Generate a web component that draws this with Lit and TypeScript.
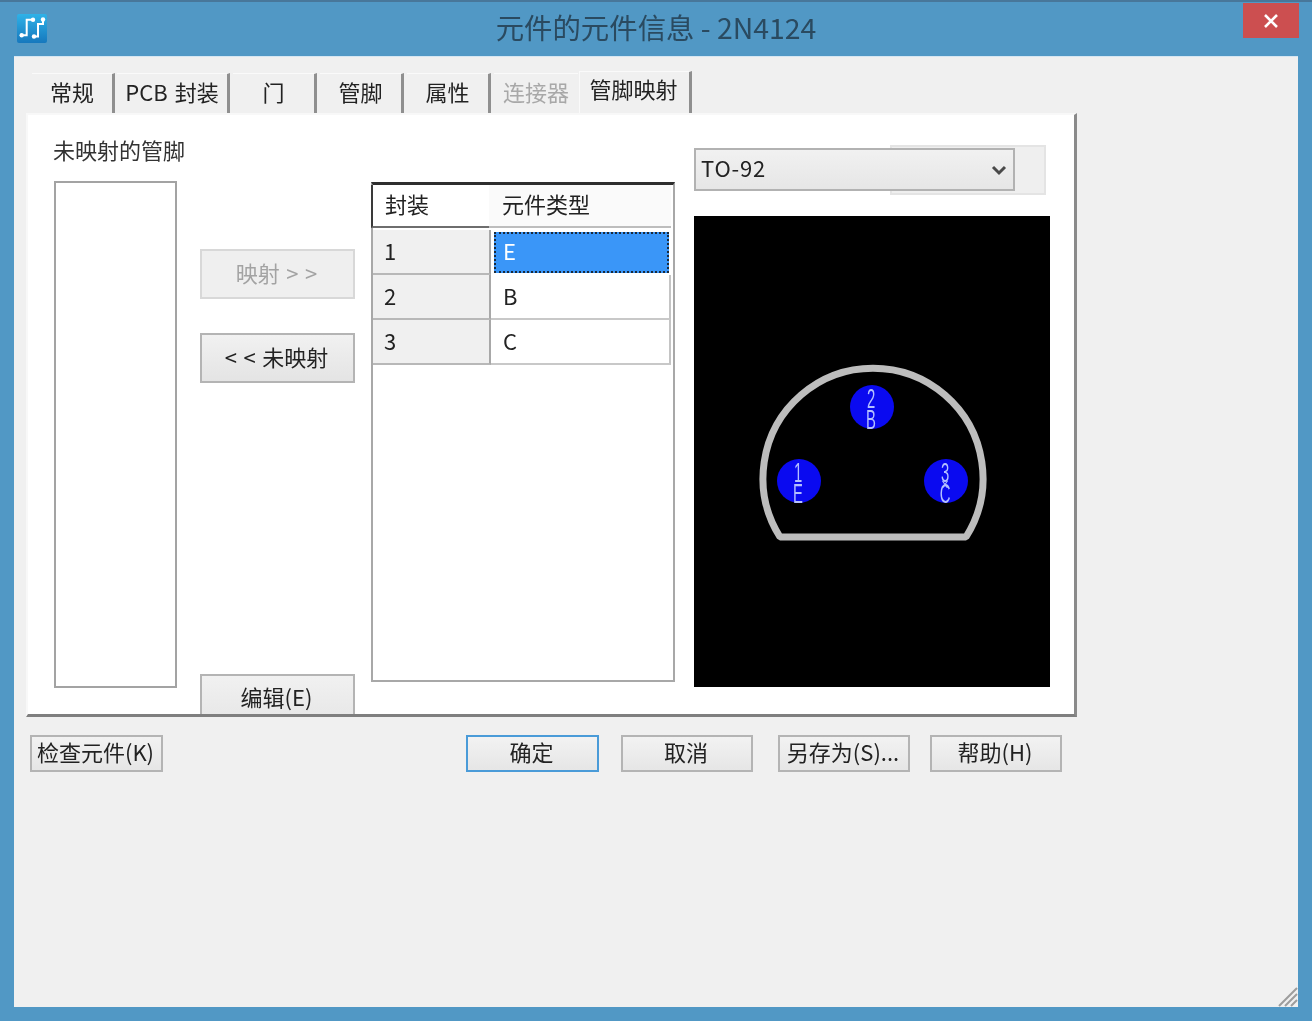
import { LitElement, html, css, svg } from "lit";
import { customElement } from "lit/decorators.js";

const tabs = [
  { t: "常规", w: 83, gap: 2 },
  { t: "PCB 封装", w: 113, gap: 3 },
  { t: "门", w: 84, gap: 3 },
  { t: "管脚", w: 84, gap: 3 },
  { t: "属性", w: 84, gap: 3 },
  { t: "连接器", w: 84, gap: 1, off: true },
  { t: "管脚映射", w: 113, gap: 0, on: true },
];
const rows = [["1", "E", true], ["2", "B", false], ["3", "C", false]] as const;
const pads = [
  { x: 872, y: 407, l: ["2", "B"] },
  { x: 799, y: 481, l: ["1", "E"] },
  { x: 946, y: 481, l: ["3", "C"] },
];

@customElement("app-root")
export class AppRoot extends LitElement {
  static styles = css`
    :host { display: block; width: 1312px; height: 1021px; overflow: hidden; font-family: "Noto Sans CJK SC", "Noto Sans", sans-serif; font-size: 22px; color: #222; }
    * { box-sizing: border-box; }
    .window { width: 1312px; height: 1021px; background: #5198c5; border-top: 2px solid #48779a; padding: 0 14px 14px; display: flex; flex-direction: column; position: relative; filter: blur(0.45px); }
    .title { height: 54px; flex: none; display: flex; align-items: center; justify-content: center; position: relative; font-size: 28.4px; color: #2a4a60; padding-bottom: 6px; }
    .appicon { position: absolute; left: 3px; top: 12px; width: 30px; height: 29px; }
    .close { position: absolute; right: -1px; top: 1px; width: 56px; height: 35px; background: #cc4f50; display: flex; align-items: center; justify-content: center; }
    .client { flex: 1; background: #f0f0f0; border-top: 1px solid #d5e6f2; padding: 14px 0 0 12px; position: relative; }
    .tabs { display: flex; align-items: flex-end; height: 42px; padding-left: 6px; position: relative; z-index: 1; }
    .tab { height: 40px; flex: none; border-right: 3px solid #8f8f8f; background: #f0f0f0; display: flex; align-items: center; justify-content: center; white-space: nowrap; line-height: 1; padding-bottom: 5px; border-top: 1px solid #fafafa; word-spacing: 2px; }
    .tab.off { color: #a8a8a8; border-right: none; }
    .tab.on { height: 42px; padding: 0 2px 9px 0; border-left: 1px solid #fafafa; }
    .panel { width: 1051px; height: 604px; background: #fff; border-top: 2px solid #f8f8f8; border-left: 2px solid #f8f8f8; border-right: 3px solid #8a8a8a; border-bottom: 3px solid #7f7f7f; overflow: hidden; display: grid; grid-template-columns: 123px 155px 304px 356px; column-gap: 0; padding-left: 26px; }
    .col1 { display: flex; flex-direction: column; }
    .label { height: 66px; padding-top: 19px; line-height: 30px; white-space: nowrap; margin-left: -1px; color: #333; }
    .list { width: 123px; height: 507px; border: 2px solid #a3a3a3; background: #fff; }
    .col2 { margin-left: 23px; width: 155px; display: flex; flex-direction: column; padding-top: 134px; }
    .btn { display: flex; align-items: center; justify-content: center; background: linear-gradient(#f1f1f1, #e4e4e4); border: 2px solid #b4b4b4; white-space: nowrap; line-height: 1; flex: none; padding-bottom: 5px; }
    .col2 .btn { width: 155px; height: 50px; word-spacing: 1.5px; padding-bottom: 4px; padding-right: 2px; }
    .col2 .b1 { color: #a3a3a3; background: #efefef; border-color: #d8d8d8; }
    .col2 .b2 { margin-top: 34px; }
    .col2 .b3 { margin-top: 291px; height: 60px; padding-bottom: 16px; }
    .col3 { margin-left: 39px; width: 304px; height: 500px; margin-top: 67px; border: 2px solid #a8a8a8; border-top: 3px solid #2e2e2e; background: #fff; position: relative; }
    .thead { display: grid; grid-template-columns: 118px 182px; height: 43px; margin-left: -2px; }
    .th { display: flex; align-items: center; line-height: 1; background: #fafafa; padding-bottom: 5px; }
    .th:first-child { border-left: 2px solid #3a3a3a; border-bottom: 2px solid #6e6e6e; background: #fff; border-right: 1px solid #e8e8e8; padding-left: 12px; width: 120px; }
    .th:last-child { border-bottom: 2px solid #bdbdbd; padding-left: 13px; }
    .tr { display: grid; grid-template-columns: 118px 182px; height: 45px; }
    .tr:nth-child(2) { margin-top: 2px; }
    .rh { background: #f0f0f0; border-right: 2px solid #a8a8a8; border-bottom: 2px solid #b8b8b8; display: flex; align-items: center; padding: 0 0 4px 11px; }
    .td { background: #fff; border-right: 2px solid #c4c4c4; border-bottom: 2px solid #c8c8c8; display: flex; align-items: center; padding: 0 0 4px 12px; margin-right: 2px; }
    .td.sel { background: #3a96f8; color: #fff; outline: 2px dotted #1a2a3c; outline-offset: -2px; margin: 2px 4px 2px 3px; border: none; padding: 0 0 6px 9px; }
    .col4 { margin-left: 58px; width: 356px; padding-top: 33px; display: flex; flex-direction: column; position: relative; }
    .selbox { width: 321px; height: 43px; border: 2px solid #b2b2b2; background: linear-gradient(#f1f1f1, #e6e6e6); display: flex; align-items: center; justify-content: space-between; padding: 0 6px 5px 5px; position: relative; z-index: 1; flex: none; letter-spacing: 0.8px; }
    .selbox svg { margin-top: 5px; }
    .selghost { position: absolute; left: 196px; top: 30px; width: 156px; height: 50px; background: #efefef; border: 2px solid #e4e4e4; }
    .canvas { display: block; width: 356px; height: 471px; margin-top: 25px; background: #000; flex: none; }
    .actions { display: flex; height: 37px; margin-top: 18px; margin-left: 4px; }
    .actions .btn { width: 132px; height: 37px; background: linear-gradient(#f2f2f2, #e6e6e6); padding-right: 2px; }
    .actions .k { width: 133px; margin-right: 303px; }
    .actions .ok { width: 133px; border-color: #4a9bd8; margin-right: 22px; }
    .actions .cancel { margin-right: 25px; }
    .actions .save { margin-right: 20px; }
    .grip { position: absolute; right: 0; bottom: 0; width: 22px; height: 22px; }
    .pad { fill: #0a0af0; }
    .outline { fill: none; stroke: #bdbdbd; stroke-width: 7; }
    .pl { fill: #b4c0ff; font-family: "Liberation Sans", sans-serif; font-size: 27px; font-weight: 400; text-anchor: middle; }
    .px { fill: #b4c0ff; font-family: "Liberation Sans", sans-serif; font-size: 13px; text-anchor: middle; }
  `;

  render() {
    return html`
      <div class="window">
        <div class="title">
          <svg class="appicon" viewBox="0 0 30 29">
            <defs><linearGradient id="ig" x1="0" y1="0" x2="0" y2="1"><stop offset="0" stop-color="#2fb2e8"/><stop offset="1" stop-color="#1678bd"/></linearGradient></defs>
            <rect width="30" height="29" rx="2" fill="url(#ig)"/>
            <path d="M4.7 21.3H9.7V5.7H16M17 22.5H21V10H26V5.5" fill="none" stroke="#fff" stroke-width="2"/>
            <circle cx="4.7" cy="21.3" r="2.2" fill="#fff"/><circle cx="16" cy="5.7" r="2.2" fill="#fff"/><circle cx="26" cy="5.5" r="2.2" fill="#fff"/><circle cx="17" cy="22.5" r="2.2" fill="#fff"/>
          </svg>
          元件的元件信息 - 2N4124
          <div class="close"><svg width="16" height="16" viewBox="0 0 16 16"><path d="M2 2l12 12M14 2L2 14" stroke="#fff" stroke-width="2.6"/></svg></div>
        </div>
        <div class="client">
          <div class="tabs">
            ${tabs.map((t) => html`<div class="tab ${t.off ? "off" : ""} ${t.on ? "on" : ""}" style="width:${t.w}px;margin-right:${t.gap}px">${t.t}</div>`)}
          </div>
          <div class="panel">
            <div class="col1">
              <div class="label">未映射的管脚</div>
              <div class="list"></div>
            </div>
            <div class="col2">
              <div class="btn b1">映射 &gt; &gt;</div>
              <div class="btn b2">&lt; &lt; 未映射</div>
              <div class="btn b3">编辑(E)</div>
            </div>
            <div class="col3">
              <div class="thead"><div class="th">封装</div><div class="th">元件类型</div></div>
              ${rows.map(([a, b, s]) => html`<div class="tr"><div class="rh">${a}</div><div class="td ${s ? "sel" : ""}">${b}</div></div>`)}
            </div>
            <div class="col4">
              <div class="selghost"></div>
              <div class="selbox">TO-92
                <svg width="16" height="12" viewBox="0 0 16 12"><path d="M2 3l6 6 6-6" fill="none" stroke="#4a4a4a" stroke-width="3"/></svg>
              </div>
              <svg class="canvas" viewBox="694 216 356 471">
                <path class="outline" d="M780 537H966A110 110 0 1 0 780 537Z" stroke-linejoin="bevel"/>
                ${pads.map((p) => svg`
                  <circle class="pad" cx=${p.x} cy=${p.y} r="22"/>
                  <text class="pl" transform="translate(${p.x - 1} ${p.y + 1}) scale(.55 1)">${p.l[0]}</text>
                  <text class="pl" transform="translate(${p.x - 1} ${p.y + 22}) scale(.55 1)">${p.l[1]}</text>`)}
                <text class="px" x="945" y="488">x</text>
              </svg>
            </div>
          </div>
          <div class="actions">
            <div class="btn k">检查元件(K)</div>
            <div class="btn ok">确定</div>
            <div class="btn cancel">取消</div>
            <div class="btn save">另存为(S)...</div>
            <div class="btn">帮助(H)</div>
          </div>
          <svg class="grip" viewBox="0 0 22 22"><path d="M21 3L3 21M21 9L9 21M21 15L15 21" stroke="#9d9d9d" stroke-width="2"/></svg>
        </div>
      </div>
    `;
  }
}
